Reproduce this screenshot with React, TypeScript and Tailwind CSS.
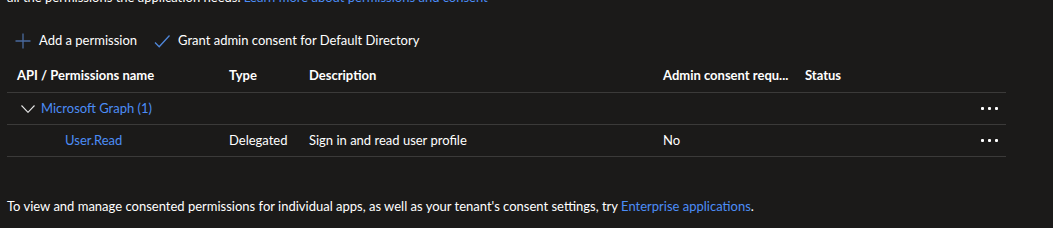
import React from 'react';

interface PermissionRow {
  name: string;
  type: string;
  description: string;
  adminConsent: string;
  status: string;
}

const rows: PermissionRow[] = [
  { name: 'User.Read', type: 'Delegated', description: 'Sign in and read user profile', adminConsent: 'No', status: '' },
];

const PlusIcon = () => (
  <svg width="16" height="16" viewBox="0 0 16 16" className="shrink-0">
    <path d="M8 0.5v15M0.5 8h15" stroke="#4a6a9e" strokeWidth="1.3" fill="none" />
  </svg>
);

const CheckIcon = () => (
  <svg width="16" height="16" viewBox="0 0 16 16" className="shrink-0">
    <path d="M1 9.5l4.2 4.2L15.5 2.5" stroke="#4f86d8" strokeWidth="1.3" fill="none" />
  </svg>
);

const ChevronDown = () => (
  <svg width="14" height="8" viewBox="0 0 14 8" className="shrink-0">
    <path d="M0.5 0.5l6.5 6.8 6.5-6.8" stroke="#e8e8e8" strokeWidth="1.1" fill="none" />
  </svg>
);

// azure-style "more" ellipsis
const MoreDots = () => (
  <div className="flex items-center gap-[4px]">
    <span className="w-[3px] h-[3px] bg-white rounded-[1px]" />
    <span className="w-[3px] h-[3px] bg-white rounded-[1px]" />
    <span className="w-[3px] h-[3px] bg-white rounded-[1px]" />
  </div>
);

const grid = 'grid grid-cols-[212px_80px_354px_142px_1fr_46px] items-center';

export default function App() {
  return (
    <div className="w-[1053px] h-[228px] overflow-hidden bg-[#1b1a19] text-white text-[13px] font-['Segoe_UI','Lato','Open_Sans',sans-serif]">
      <p className="px-[7px] leading-[20px] -mt-[13px]">
        all the permissions the application needs.{' '}
        <span className="text-[#4c8df6]">Learn more about permissions and consent</span>
      </p>

      <div className="flex items-center h-[32px] mt-[18px] pl-[15px]">
        <button className="flex items-center gap-[8px]">
          <PlusIcon />
          <span>Add a permission</span>
        </button>
        <button className="flex items-center gap-[8px] ml-[17px]">
          <CheckIcon />
          <span>Grant admin consent for Default Directory</span>
        </button>
      </div>

      <div className="ml-[7px] w-[999px]">
        <div className={`${grid} h-[36px] pt-[2px] font-bold border-b border-[#3b3a39] [&>div]:pl-[10px]`}>
          <div>API / Permissions name</div>
          <div>Type</div>
          <div>Description</div>
          <div>Admin consent requ...</div>
          <div>Status</div>
          <div />
        </div>

        <div className={`${grid} h-[32px] border-b border-[#3b3a39]`}>
          <div className="flex items-center gap-[6px] pl-[14px] text-[#4c8df6]">
            <ChevronDown />
            <span>Microsoft Graph (1)</span>
          </div>
          <div />
          <div />
          <div />
          <div />
          <div className="flex justify-start pl-[21px]">
            <MoreDots />
          </div>
        </div>

        {rows.map((row, i) => (
          <div key={i} className={`${grid} h-[32px] border-b border-[#3b3a39] [&>div]:pl-[10px]`}>
            <div className="!pl-[58px] text-[#4c8df6]">{row.name}</div>
            <div>{row.type}</div>
            <div>{row.description}</div>
            <div>{row.adminConsent}</div>
            <div>{row.status}</div>
            <div className="flex justify-start !pl-[21px]">
              <MoreDots />
            </div>
          </div>
        ))}
      </div>

      <p className="px-[7px] mt-[39px] leading-[20px]">
        To view and manage consented permissions for individual apps, as well as your tenant's consent settings, try{' '}
        <span className="text-[#4c8df6]">Enterprise applications</span>.
      </p>
    </div>
  );
}
